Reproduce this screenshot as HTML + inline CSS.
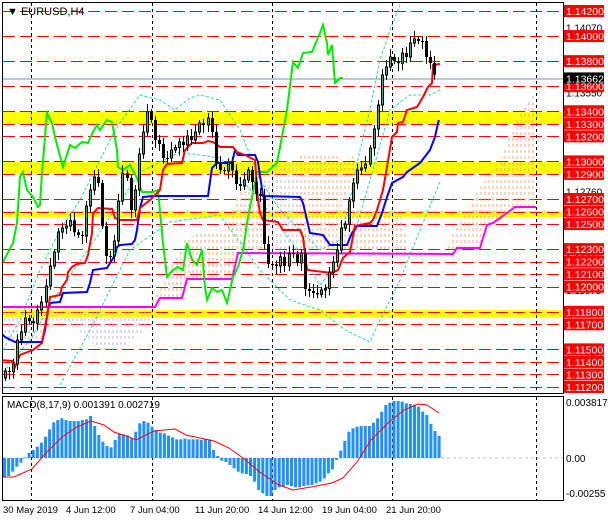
<!DOCTYPE html>
<html><head><meta charset="utf-8"><style>
html,body{margin:0;padding:0;background:#fff;width:608px;height:521px;overflow:hidden}
svg{display:block;font-family:"Liberation Sans",sans-serif}
</style></head><body>
<svg id="s" width="608" height="521" viewBox="0 0 608 521" xmlns="http://www.w3.org/2000/svg">
<defs>
<pattern id="hp" width="4" height="6" patternUnits="userSpaceOnUse"><line x1="1" y1="0" x2="1" y2="3" stroke="#f0a878" stroke-width="1"/></pattern>
<pattern id="hg" width="4" height="6" patternUnits="userSpaceOnUse"><line x1="1" y1="0" x2="1" y2="3" stroke="#c8b8c8" stroke-width="1"/></pattern>
<clipPath id="cm"><rect x="3" y="3" width="560" height="390"/></clipPath>
</defs>
<rect width="608" height="521" fill="#fff"/>
<g clip-path="url(#cm)">
<rect x="3" y="112" width="560" height="12" fill="#ffff00"/>
<rect x="3" y="162" width="560" height="12" fill="#ffff00"/>
<rect x="3" y="211" width="560" height="6" fill="#ffff00"/>
<rect x="3" y="310" width="560" height="7" fill="#ffff00"/>
<g id="hl" stroke="#ff0000" stroke-width="1" stroke-dasharray="12,5"></g>
<line x1="3" y1="79" x2="563" y2="79" stroke="#8090a0"/>
<polygon fill="url(#hg)" points="3,308 155,308 145,330 120,350 100,350 80,332 60,320 40,340 20,345 3,335"/>
<polygon fill="url(#hp)" points="145,308 160,290 185,240 200,232 225,230 240,190 262,182 262,253 238,253 232,279 187,279 182,298 160,298 155,307"/>
<polygon fill="url(#hg)" points="262,170 300,160 300,253 262,253"/>
<polygon fill="url(#hp)" points="300,155 330,153 345,160 355,155 360,165 340,210 400,212 410,254 300,254"/>
<polygon fill="url(#hp)" points="445,255 455,228 480,188 500,160 520,112 536,92 536,207 515,207 500,218 487,225 480,248 457,248 453,254"/>
<g fill="none" stroke="#19e0a0" stroke-width="1" stroke-dasharray="3,2">
<polyline points="3,350 20,320 40,270 60,230 80,200 95,170 115,130 140,95 160,100 175,110 190,98 200,95 220,100 240,130 260,180 280,210 300,230 320,250 340,240 350,200 360,150 370,110 380,60 390,30 400,5"/>
<polyline points="3,372 30,340 60,290 100,232 140,172 180,152 220,158 260,200 290,240 320,285 350,250 370,180 390,110 410,95 430,95 440,90"/>
<polyline points="60,385 90,330 130,250 170,222 220,215 260,270 290,300 320,310 345,330 370,342 380,320 400,280 420,230 440,182"/>
</g>
<g id="vl" stroke="#000" stroke-width="1" stroke-dasharray="3,3"></g>
<polyline fill="none" stroke="#ff00ff" stroke-width="2" points="2,307 155,307 160,298 182,298 187,279 232,279 238,253 453,254 457,248 480,248 487,225 493,223 500,218 507,213 515,207 536,207"/>
<polyline fill="none" stroke="#00ee00" stroke-width="2" points="3,262 13,243 17,223 20,177 23,172 27,190 33,197 38,207 40,205 42,173 47,113 52,123 55,137 63,167 70,145 75,148 82,142 88,143 93,132 97,125 100,130 107,120 112,122 117,150 118,167 123,170 130,165 137,178 142,192 153,192 158,190 163,243 167,277 173,270 178,267 183,270 187,243 192,260 197,265 202,250 205,287 207,300 212,288 217,292 222,290 227,303 230,290 233,277 238,267 243,250 248,217 257,172 267,172 277,163 287,110 293,62 298,68 303,53 312,52 320,33 323,25 327,43 328,55 332,45 335,83 340,78 343,78"/>
<polyline fill="none" stroke="#0000ff" stroke-width="2" points="0,332 5,337 15,342 42,342 45,330 48,310 50,303 60,302 63,293 87,292 90,283 93,270 107,268 112,260 115,255 117,247 120,245 132,244 135,240 137,230 140,208 143,197 153,196 208,196 212,168 217,163 232,163 235,150 238,155 255,155 258,162 263,196 300,197 303,203 310,233 323,235 330,245 347,245 352,233 357,226 377,226 382,213 387,197 392,183 403,177 407,172 420,163 430,150 435,137 438,123 439,120"/>
<polyline fill="none" stroke="#ff0000" stroke-width="2" points="0,360 12,361 15,367 20,355 25,353 33,350 42,343 43,337 47,317 50,297 60,295 62,287 67,280 68,272 72,267 77,264 85,263 88,255 92,233 93,213 98,208 112,209 115,218 120,220 137,220 140,208 150,200 160,190 163,170 167,164 182,163 185,150 192,143 203,143 208,141 213,142 220,147 233,147 237,152 245,155 255,160 258,200 260,213 263,220 278,222 283,230 300,230 303,237 307,270 332,273 338,270 343,258 350,252 355,226 370,223 373,220 377,210 383,190 387,167 392,137 397,132 398,123 403,122 407,110 417,107 423,97 428,87 432,83 433,65 440,64"/>
<g id="cd"></g>
</g>
<rect x="2.5" y="2.5" width="561" height="391" fill="none" stroke="#000"/>
<rect x="2.5" y="396.5" width="561" height="104" fill="none" stroke="#000"/>
<text x="7" y="15" font-size="11">&#9660; EURUSD,H4</text>
<line x1="3" y1="458" x2="563" y2="458" stroke="#c0c0c0" stroke-dasharray="3,3"/>
<g id="vl2" stroke="#000" stroke-dasharray="3,3"></g>
<g id="hist" fill="#1e90ff"></g>
<polyline fill="none" stroke="#ff0000" stroke-width="1" points="3,477 14,477 32,469 46,453 62,437 77,427 91,421 104,425 114,432 129,437 136,440 154,431 175,429 186,435 214,441 229,448 243,458 261,473 279,485 293,490 311,487 332,483 343,478 357,462 371,440 389,422 404,410 418,404 427,405 439,413"/>
<text x="7" y="408" font-size="10">MACD(8,17,9) 0.001391 0.002719</text>
<g font-size="10" fill="#000">
<text x="566" y="406">0.003817</text>
<text x="566" y="462">0.00</text>
<text x="566" y="497">-0.00255</text>
</g>
<g font-size="9.5" fill="#000">
<text x="3" y="513">30 May 2019</text>
<text x="66" y="513">4 Jun 12:00</text>
<text x="130" y="513">7 Jun 04:00</text>
<text x="195" y="513">11 Jun 20:00</text>
<text x="258" y="513">14 Jun 12:00</text>
<text x="322" y="513">19 Jun 04:00</text>
<text x="386" y="513">21 Jun 20:00</text>
</g>
<g id="ax"></g>
</svg>
<script>
(function(){
var NS="http://www.w3.org/2000/svg";
function el(p,t,a){var e=document.createElementNS(NS,t);for(var k in a)e.setAttribute(k,a[k]);p.appendChild(e);return e;}
function Y(p){return 11+(1.142-p)*12533;}
var hl=document.getElementById('hl');
var lv=[1.142,1.140,1.138,1.136,1.134,1.133,1.132,1.130,1.129,1.127,1.126,1.125,1.123,1.122,1.121,1.120,1.118,1.117,1.115,1.114,1.113,1.112];
lv.forEach(function(p){var y=Math.round(Y(p))+0.5;el(hl,'line',{x1:3,y1:y,x2:563,y2:y});});
[31,152,272,392,536].forEach(function(x){el(document.getElementById('vl'),'line',{x1:x+.5,y1:3,x2:x+.5,y2:393});el(document.getElementById('vl2'),'line',{x1:x+.5,y1:397,x2:x+.5,y2:500});});
var ax=document.getElementById('ax');
[["1.14070",1.1407],["1.13550",1.1355],["1.12760",1.1276],["1.12235",1.12235],["1.11975",1.11975],["1.11450",1.1145]].forEach(function(a){var t=el(ax,'text',{x:566,y:Y(a[1])+4,'font-size':10});t.textContent=a[0];});
lv.forEach(function(p){var y=Y(p);el(ax,'rect',{x:564,y:y-6,width:40,height:12,fill:'#ff0000'});var t=el(ax,'text',{x:566,y:y+4,'font-size':10.5,fill:'#fff'});t.textContent=p.toFixed(5);});
var yb=Y(1.13662);el(ax,'rect',{x:564,y:yb-6,width:40,height:11,fill:'#000'});var tt=el(ax,'text',{x:566,y:yb+4,'font-size':10.5,fill:'#fff'});tt.textContent='1.13662';
var cp=[[4,375],[10,370],[15,345],[20,330],[25,320],[30,322],[35,315],[40,300],[45,290],[50,260],[55,240],[60,225],[65,230],[70,218],[75,235],[80,240],[85,210],[90,185],[95,165],[100,215],[105,260],[110,255],[115,225],[120,170],[125,175],[130,210],[135,180],[140,140],[145,115],[150,120],[155,140],[160,150],[165,165],[170,150],[175,142],[180,145],[185,140],[190,140],[195,125],[200,125],[205,120],[210,125],[215,160],[220,175],[225,165],[230,168],[235,180],[240,190],[245,170],[250,180],[255,190],[260,200],[265,270],[270,265],[275,262],[280,258],[285,268],[290,250],[295,260],[300,255],[305,295],[310,295],[315,290],[320,292],[325,285],[330,270],[335,250],[340,230],[345,220],[350,195],[355,165],[360,170],[365,160],[370,150],[375,115],[380,80],[385,65],[390,60],[395,62],[400,55],[405,55],[410,45],[415,35],[420,40],[425,55],[430,70],[435,78],[438,80]];
function ip(x){for(var i=1;i<cp.length;i++){if(x<=cp[i][0]){var a=cp[i-1],b=cp[i];return a[1]+(b[1]-a[1])*(x-a[0])/(b[0]-a[0]);}}return 80;}
var cd=document.getElementById('cd');var prev=378;
for(var i=0;i<107;i++){var x=Math.round(4+i*4.05);var c=ip(x)+((i*7)%5-2)*2;var o=prev;var hi=Math.min(o,c)-3-(i*13)%6;var lo=Math.max(o,c)+3+(i*11)%6;
el(cd,'line',{x1:x+1.5,y1:hi,x2:x+1.5,y2:lo,stroke:'#000','stroke-width':1});
var by=Math.min(o,c),h=Math.max(1,Math.abs(c-o));
if(c<o){el(cd,'rect',{x:x+0.5,y:by,width:2,height:h,fill:'#3cb371',stroke:'#000','stroke-width':1});}else{el(cd,'rect',{x:x,y:by,width:3,height:h,fill:'#000'});}
prev=c;}
var hv=[320,318,305,290,278,262,248,240,230,218,200,178,157,150,145,150,153,153,153,150,148,138,168,195,215,228,232,210,192,193,196,205,185,160,153,158,170,180,188,190,197,202,208,208,206,208,208,208,210,208,208,240,258,272,276,285,295,305,310,312,318,335,360,370,378,378,360,352,350,345,348,352,352,348,346,345,340,335,325,310,298,270,242,213,185,175,170,168,168,168,158,145,125,105,98,93,93,95,100,102,104,110,125,135,162,183,198];
var hg=document.getElementById('hist');
hv.forEach(function(v,i){var y=370+v/3;var x=3+i*4.1;var t=Math.min(y,458),h=Math.abs(y-458);el(hg,'rect',{x:x,y:t,width:3,height:Math.max(h,1)});});
})();
</script>
</body></html>
